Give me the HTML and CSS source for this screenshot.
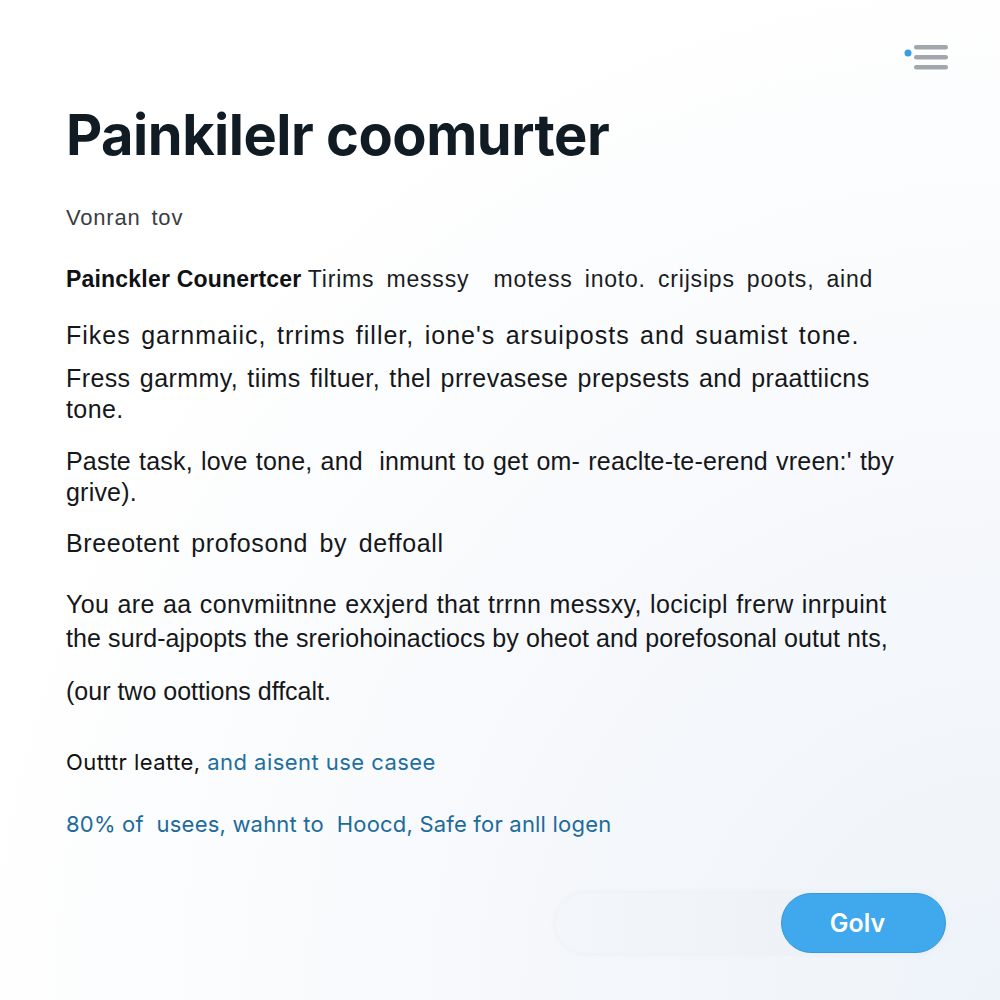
FILE: index.html
```html
<!DOCTYPE html>
<html lang="en">
<head>
<meta charset="utf-8">
<title>Painkilelr coomurter</title>
<link rel="stylesheet" href="styles.css">
</head>
<body>
<div class="page">
  <header class="topbar">
    <button class="menu" aria-label="Menu">
      <svg width="48" height="32" viewBox="0 0 48 32">
        <circle cx="8" cy="13" r="3.5" fill="#3a9ee0"/>
        <rect x="14" y="5" width="34" height="4.5" rx="2.2" fill="#a2a7ad"/>
        <rect x="14" y="15" width="34" height="4.5" rx="2.2" fill="#a2a7ad"/>
        <rect x="14" y="25" width="34" height="4.5" rx="2.2" fill="#a2a7ad"/>
      </svg>
    </button>
  </header>
  <main class="content">
    <h1 class="title">Painkilelr coomurter</h1>
    <p class="sub">Vonran tov</p>
    <p class="lead"><b>Painckler Counertcer</b> <span class="lead-rest">Tirims messsy&nbsp; motess inoto. crijsips poots, aind</span></p>
    <p class="body b1">Fikes garnmaiic, trrims filler, ione's arsuiposts and suamist tone.</p>
    <p class="body b2">Fress garmmy, tiims filtuer, thel prrevasese prepsests and praattiicns<br>tone.</p>
    <p class="body b3">Paste task, love tone, and&nbsp; inmunt to get om- reaclte-te-erend vreen:' tby<br>grive).</p>
    <p class="body b4">Breeotent profosond by deffoall</p>
    <p class="body b5"><span class="l1">You are aa convmiitnne exxjerd that trrnn messxy, locicipl frerw inrpuint</span><br><span class="l2">the surd-ajpopts the sreriohoinactiocs by oheot and porefosonal outut nts,</span></p>
    <p class="body b6">(our two oottions dffcalt.</p>
    <p class="out">Outttr leatte, <span class="blue">and aisent use casee</span></p>
    <p class="stat">80% of&nbsp; usees, wahnt to&nbsp; Hoocd, Safe for anll logen</p>
  </main>
  <div class="actions">
    <div class="pill">
      <button class="go">Golv</button>
    </div>
  </div>
</div>
</body>
</html>
```
FILE: styles.css
```css
* { box-sizing: border-box; }
html, body { margin: 0; padding: 0; }
body {
  width: 1000px;
  height: 1000px;
  overflow: hidden;
  background: radial-gradient(ellipse at 100% 100%, #eef3f9 0%, #f7f9fc 40%, #ffffff 75%);
  font-family: "Liberation Sans", Arial, sans-serif;
  color: #1a1c1f;
}
.page {
  position: relative;
  height: 1000px;
  display: flex;
  flex-direction: column;
}
.topbar {
  display: flex;
  justify-content: flex-end;
  padding: 40px 52px 0 0;
  height: 80px;
}
.menu {
  border: 0;
  background: none;
  padding: 0;
  width: 48px;
  height: 32px;
}
.content {
  padding-left: 66px;
  padding-right: 40px;
}
p { margin: 0; white-space: nowrap; }
.title {
  margin: 23px 0 0;
  font-family: Inter, "Noto Sans", sans-serif;
  font-weight: 700;
  font-size: 56px;
  line-height: 64px;
  letter-spacing: -0.5px;
  color: #111b24;
}
.sub {
  margin-top: 39px;
  font-size: 22px;
  line-height: 24px;
  color: #3a3d42;
  letter-spacing: 0.8px;
  word-spacing: 4px;
}
.lead {
  margin-top: 35px;
  font-size: 23px;
  line-height: 28px;
  color: #1a1c1f;
}
.lead b {
  letter-spacing: 0.2px;
  color: #0f1114;
}
.lead-rest {
  letter-spacing: 0.8px;
  word-spacing: 5px;
}
.body {
  font-size: 25px;
  line-height: 31px;
  color: #15171a;
}
.b1 { margin-top: 27px; letter-spacing: 1px; word-spacing: 2.5px; }
.b2 { margin-top: 12px; letter-spacing: 0.4px; word-spacing: 2px; }
.b3 { margin-top: 21px; letter-spacing: 0.2px; word-spacing: 1px; }
.b4 { margin-top: 20px; letter-spacing: 0.6px; word-spacing: 4px; }
.b5 { margin-top: 28px; line-height: 34px; }
.l1 { letter-spacing: 0.35px; word-spacing: 1px; }
.l2 { letter-spacing: 0.1px; word-spacing: 0; }
.b6 { margin-top: 21px; letter-spacing: 0; word-spacing: 0; }
.out {
  margin-top: 41px;
  font-family: Inter, "Noto Sans", sans-serif;
  font-size: 22px;
  line-height: 28px;
  letter-spacing: 0.45px;
  color: #111;
}
.blue { color: #1f6f9e; }
.stat {
  margin-top: 34px;
  font-family: Inter, "Noto Sans", sans-serif;
  font-size: 22px;
  line-height: 28px;
  letter-spacing: 0.2px;
  color: #1d6b9a;
}
.actions {
  margin-top: auto;
  display: flex;
  justify-content: flex-end;
  padding: 0 54px 47px 0;
}
.pill {
  width: 390px;
  height: 60px;
  border-radius: 30px;
  background: linear-gradient(90deg, #f3f6fa 0%, #ebeff5 100%);
  box-shadow: 0 0 6px rgba(200, 210, 225, 0.25);
  display: flex;
  justify-content: flex-end;
}
.go {
  width: 165px;
  height: 60px;
  padding: 0 12px 0 0;
  border: 1px solid #3a98d8;
  border-radius: 30px;
  background: #40a8ec;
  color: #fff;
  font-family: Inter, "Noto Sans", sans-serif;
  font-size: 25px;
  font-weight: 600;
  letter-spacing: 0;
  cursor: pointer;
}
```
